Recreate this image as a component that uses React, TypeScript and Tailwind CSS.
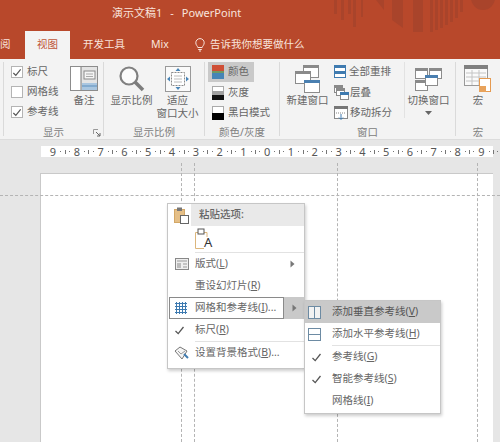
import React from "react";

const Check = ({ className = "" }: { className?: string }) => (
  <svg width="11" height="11" viewBox="0 0 11 11" className={className}>
    <path d="M1.5 6 L4.2 8.6 L9.5 2" fill="none" stroke="#555" strokeWidth="1.3" />
  </svg>
);

const Arrow = () => (
  <svg width="5" height="8" viewBox="0 0 5 8">
    <path d="M0.5 0.5 L4.5 4 L0.5 7.5 Z" fill="#777" />
  </svg>
);

const CheckRow = ({ checked, label }: { checked?: boolean; label: string }) => (
  <div className="flex h-[20px] items-center gap-[4px]">
    <span className="flex h-[12px] w-[12px] items-center justify-center border border-[#b4b4b4] bg-white">
      {checked && <Check />}
    </span>
    <span>{label}</span>
  </div>
);

const Group = ({ w, label, children, launcher }: { w: string; label?: string; children?: React.ReactNode; launcher?: boolean }) => (
  <div className={`relative flex flex-col border-r border-[#dadada] ${w}`}>
    <div className="flex flex-1">{children}</div>
    {label && <div className="mb-[-3px] text-center leading-[14px] text-[#808080]">{label}</div>}
    {launcher && (
      <svg width="8" height="8" viewBox="0 0 8 8" className="absolute bottom-[-1px] right-[2px]">
        <path d="M0.5 0.5 H5 M0.5 0.5 V5" stroke="#999" fill="none" />
        <path d="M3 3 L7 7 M7 4 V7 H4" stroke="#666" fill="none" />
      </svg>
    )}
  </div>
);

const LargeBtn = ({ icon, lines, className = "" }: { icon: React.ReactNode; lines: React.ReactNode[]; className?: string }) => (
  <div className={`flex flex-col items-center pt-[3px] ${className}`}>
    <div className="flex h-[27px] items-center justify-center">{icon}</div>
    <div className="mt-[2px] text-center leading-[13px]">
      {lines.map((l, i) => (
        <div key={i} className="whitespace-nowrap">{l}</div>
      ))}
    </div>
  </div>
);

const NotesIcon = () => (
  <svg width="28" height="25" viewBox="0 0 28 25">
    <rect x="0.5" y="0.5" width="27" height="24" fill="#e4e4e4" stroke="#8c8c8c" />
    <rect x="1" y="1" width="10" height="23" fill="#fff" />
    <path d="M11 1 V24" stroke="#777" />
    <rect x="14" y="5" width="11" height="8" fill="#f4f4f4" stroke="#8a8a8a" />
    <path d="M16 8 H23 M16 10.500 H23" stroke="#aaa" />
    <rect x="12" y="17" width="15" height="7" fill="#a9c6e0" />
    <path d="M12 20 H27" stroke="#5c8fbd" />
  </svg>
);

const ZoomIcon = () => (
  <svg width="26" height="26" viewBox="0 0 26 26">
    <circle cx="10" cy="10" r="8.500" fill="#fbfbfb" stroke="#808080" strokeWidth="2.200" />
    <path d="M16 16 L24 24" stroke="#7c7c7c" strokeWidth="3.500" />
  </svg>
);

const FitIcon = () => (
  <svg width="26" height="26" viewBox="0 0 26 26">
    <rect x="0.5" y="0.5" width="25" height="25" fill="#fafafa" stroke="#999" />
    <rect x="6.500" y="6.500" width="13" height="13" fill="#fff" stroke="#8a8a8a" strokeDasharray="2 1" />
    <path d="M9 10 H17 M9 13 H17 M9 16 H17" stroke="#bbb" />
    <path d="M13 2 L15.500 5 H10.500 Z M13 24 L15.500 21 H10.500 Z M2 13 L5 10.500 V15.500 Z M24 13 L21 10.500 V15.500 Z" fill="#4a86b8" />
  </svg>
);

const Swatch = ({ kind }: { kind: "color" | "gray" | "bw" }) => (
  <svg width="12" height="14" viewBox="0 0 12 14" className="shrink-0">
    {kind === "color" && (
      <>
        <rect width="12" height="6" fill="#cf4f36" />
        <rect y="6" width="12" height="2" fill="#6f9a63" />
        <rect y="8" width="12" height="6" fill="#4685b6" />
      </>
    )}
    {kind === "gray" && (
      <>
        <rect x="0.5" y="0.5" width="11" height="13" fill="#fff" stroke="#aaa" />
        <rect y="5" width="12" height="4" fill="#a0a0a0" />
        <rect y="9" width="12" height="5" fill="#111" />
      </>
    )}
    {kind === "bw" && (
      <>
        <rect x="0.5" y="0.5" width="11" height="13" fill="#fff" stroke="#aaa" />
        <rect y="7" width="12" height="7" fill="#000" />
      </>
    )}
  </svg>
);

const MiniWin = ({ x, y, w, h, bar = "#8a8a8a" }: { x: number; y: number; w: number; h: number; bar?: string }) => (
  <>
    <rect x={x + 0.5} y={y + 0.5} width={w} height={h} fill="#fff" stroke="#8c8c8c" />
    <rect x={x} y={y} width={w + 1} height={3} fill={bar} />
  </>
);

const NewWindowIcon = () => (
  <svg width="25" height="28" viewBox="0 0 25 28">
    <MiniWin x={8} y={0} w={15} h={12} />
    <MiniWin x={0} y={6} w={15} h={12} />
    <MiniWin x={9} y={15} w={15} h={12} bar="#4a7fb0" />
  </svg>
);

const SwitchIcon = () => (
  <svg width="27" height="24" viewBox="0 0 27 24">
    <MiniWin x={0} y={1} w={12} h={10} />
    <MiniWin x={14} y={1} w={12} h={10} />
    <MiniWin x={0} y={13} w={12} h={10} />
    <MiniWin x={10} y={8} w={12} h={10} bar="#4a7fb0" />
  </svg>
);

const MacroIcon = () => (
  <svg width="28" height="27" viewBox="0 0 28 27">
    <rect x="0.5" y="0.5" width="23" height="20" fill="#fafafa" stroke="#999" />
    <rect width="24" height="4" fill="#808080" />
    <path d="M2 8 H22 M2 12 H22 M2 16 H22 M8 5 V20 M15 5 V20" stroke="#c4c4c4" />
    <rect x="15.500" y="13.500" width="11" height="13" fill="#fff" stroke="#e59a50" />
    <rect x="15" y="21" width="7" height="6" fill="#e8a35c" />
  </svg>
);

const ArrangeIcon = () => (
  <svg width="13" height="14" viewBox="0 0 13 14" className="shrink-0">
    <rect x="0.5" y="0.5" width="11" height="12" fill="#fff" stroke="#3f7bb0" />
    <rect width="12" height="3" fill="#3f7bb0" />
    <rect y="6" width="12" height="3" fill="#3f7bb0" />
  </svg>
);

const CascadeIcon = () => (
  <svg width="15" height="15" viewBox="0 0 15 15" className="shrink-0">
    <MiniWin x={0} y={0} w={8} h={7} />
    <MiniWin x={2} y={3} w={8} h={7} />
    <MiniWin x={6} y={7} w={8} h={7} bar="#3f7bb0" />
  </svg>
);

const SplitIcon = () => (
  <svg width="14" height="14" viewBox="0 0 14 14" className="shrink-0">
    <rect x="0.5" y="0.5" width="13" height="12" fill="#fff" stroke="#8a8a8a" />
    <rect width="14" height="3" fill="#777" />
    <path d="M2 7 H12" stroke="#888" strokeDasharray="1 1" />
    <path d="M7 8 V13 M5 11.500 L7 13.500 L9 11.500" stroke="#3f7bb0" fill="none" />
  </svg>
);

const PasteIcon = () => (
  <svg width="15" height="17" viewBox="0 0 15 17">
    <rect x="0.500" y="2.500" width="10" height="13" fill="#e5bf87" stroke="#d3a766" />
    <rect x="3" y="0.500" width="5" height="3.500" fill="#777" />
    <rect x="6.500" y="8.500" width="8" height="8" fill="#fff" stroke="#666" />
  </svg>
);

const PasteTextIcon = () => (
  <svg width="16" height="22" viewBox="0 0 16 22">
    <path d="M9 20.500 H0.500 V4.500 H12 V9" fill="none" stroke="#dcb67c" />
    <rect x="3" y="1" width="6" height="5" fill="#fff" stroke="#555" />
  </svg>
);

const LayoutIcon = () => (
  <svg width="14" height="12" viewBox="0 0 14 12">
    <rect x="0.500" y="0.500" width="13" height="11" fill="#eee" stroke="#888" />
    <path d="M2 3 H12" stroke="#999" />
    <rect x="2" y="5" width="4" height="5" fill="#bbb" />
    <path d="M8 6 H12 M8 9 H12" stroke="#999" />
  </svg>
);

const GridIcon = () => (
  <svg width="12" height="12" viewBox="0 0 12 12">
    <path d="M0 1.500 H12 M0 4.500 H12 M0 7.500 H12 M0 10.500 H12 M1.500 0 V12 M4.500 0 V12 M7.500 0 V12 M10.500 0 V12" stroke="#3d7ab0" />
  </svg>
);

const BackgroundIcon = () => (
  <svg width="16" height="15" viewBox="0 0 16 15">
    <path d="M1 5 L6 1 L13 5 L8 13 Z" fill="#f5f5f5" stroke="#777" />
    <path d="M4 5 L7 8 L11 5" fill="none" stroke="#999" />
    <path d="M10 8 L14 12" stroke="#3f7bb0" strokeWidth="2" />
  </svg>
);

const SplitBox = ({ vertical }: { vertical?: boolean }) => (
  <svg width="13" height="13" viewBox="0 0 13 13" className="mr-[8px]">
    <rect x="0.500" y="0.500" width="12" height="12" fill={vertical ? "#f2f2f2" : "#fff"} stroke="#6d8ba3" />
    {vertical ? <path d="M6.500 1 V12" stroke="#6d8ba3" /> : <path d="M1 6.500 H12" stroke="#6d8ba3" />}
  </svg>
);

const MenuRow = ({ icon, children, arrow, className = "" }: { icon?: React.ReactNode; children: React.ReactNode; arrow?: boolean; className?: string }) => (
  <div className={`flex h-[22px] items-center ${className}`}>
    <span className="flex w-[27px] shrink-0 justify-center">{icon}</span>
    <span className="flex-1 whitespace-nowrap">{children}</span>
    {arrow && <span className="mr-[9px]"><Arrow /></span>}
  </div>
);

const rulerNums = [9, 8, 7, 6, 5, 4, 3, 2, 1, 0, 1, 2, 3, 4, 5, 6, 7, 8, 9];

const RulerMarks = () => (
  <div className="flex h-[11px] w-[452px] items-center bg-white pl-[1px] text-[#555]">
    <span className="h-[4px] w-px bg-[#777]" />
    <span className="mx-[3.5px] h-px w-px bg-[#777]" />
    {rulerNums.map((n, i) => (
      <div key={i} className="flex w-[23.8px] shrink-0 items-center justify-between">
        <span className="w-[8px] text-center text-[11px] leading-[11px]">{n}</span>
        <span className="h-px w-px bg-[#777]" />
        <span className="h-[4px] w-px bg-[#777]" />
        <span className="mr-[3px] h-px w-px bg-[#777]" />
      </div>
    ))}
  </div>
);

export default function App() {
  return (
    <div className="h-[442px] w-[500px] overflow-hidden bg-[#e6e6e6] font-['Noto_Sans','Noto_Sans_CJK_SC',sans-serif] text-[10.500px] text-[#666]">
      {/* title bar + tabs */}
      <div className="relative h-[59px] bg-[#b8482b] text-[#f8e4dd]">
        <svg width="170" height="34" viewBox="0 0 170 34" className="absolute right-0 top-0">
          <g fill="#a9442b">
            <rect x="4" width="3" height="14" />
            <rect x="11" width="3" height="20" />
            <rect x="18" width="3" height="14" />
            <rect x="23" width="3" height="27" />
            <rect x="31" width="2" height="17" />
            <path d="M46 0 H54 V10 Z" />
            <path d="M62 0 H73 V28 L62 20 Z" />
            <rect x="83" width="10" height="32" />
            <rect x="100" width="3" height="32" />
            <rect x="105" width="3" height="30" />
            <rect x="110" width="3" height="28" />
            <rect x="115" width="3" height="25" />
            <rect x="120" width="3" height="22" />
            <rect x="125" width="3" height="18" />
            <rect x="130" width="3" height="12" />
            <circle cx="153" cy="-2" r="12" />
          </g>
        </svg>
        <div className="flex h-[31px] items-center pb-[4px] pl-[112px] text-[11px]">
          <span>演示文稿1</span>
          <span className="mx-[8px]">-</span>
          <span>PowerPoint</span>
        </div>
        <div className="flex h-[28px] items-center text-[10.500px]">
          <span className="w-[25px]">阅</span>
          <span className="flex h-full w-[45px] items-center justify-center bg-[#f3f3f3] text-[#c0563a]">视图</span>
          <span className="ml-[13px] w-[68px]">开发工具</span>
          <span className="w-[44px]">Mix</span>
          <svg width="10" height="14" viewBox="0 0 10 14" className="mr-[5px]">
            <path d="M2.800 9.500 C2.500 8 0.800 7 0.800 4.800 A4.200 4.200 0 0 1 9.200 4.800 C9.200 7 7.500 8 7.200 9.500 Z M3.200 11.500 H6.800 M4 13 H6" fill="none" stroke="#f8e4dd" />
          </svg>
          <span>告诉我你想要做什么</span>
        </div>
      </div>

      {/* ribbon */}
      <div className="flex h-[81px] border-b border-[#dcdcdc] bg-[#f3f3f3] py-[3px]">
        <Group w="w-[4px]" />
        <Group w="w-[100px]" label="显示" launcher>
          <div className="ml-[7px] flex w-[54px] flex-col">
            <CheckRow checked label="标尺" />
            <CheckRow label="网格线" />
            <CheckRow checked label="参考线" />
          </div>
          <LargeBtn icon={<NotesIcon />} lines={["备注"]} className="ml-[4px] w-[30px]" />
        </Group>
        <Group w="w-[101px]" label="显示比例">
          <LargeBtn icon={<ZoomIcon />} lines={["显示比例"]} className="ml-[6px] w-[43px]" />
          <LargeBtn icon={<FitIcon />} lines={["适应", "窗口大小"]} className="ml-[3px] w-[43px]" />
        </Group>
        <Group w="w-[75px]" label="颜色/灰度">
          <div className="ml-[3px] flex w-[66px] flex-col">
            <div className="flex h-[20px] w-[46px] items-center gap-[4px] bg-[#c9c9c9] pl-[4px]"><Swatch kind="color" />颜色</div>
            <div className="flex h-[21px] items-center gap-[4px] pl-[4px]"><Swatch kind="gray" />灰度</div>
            <div className="flex h-[20px] items-center gap-[4px] whitespace-nowrap pl-[4px]"><Swatch kind="bw" />黑白模式</div>
          </div>
        </Group>
        <Group w="w-[176px]" label="窗口">
          <LargeBtn icon={<NewWindowIcon />} lines={["新建窗口"]} className="ml-[6px] w-[43px]" />
          <div className="ml-[5px] flex w-[68px] flex-col">
            <div className="flex h-[20px] items-center gap-[2px]"><ArrangeIcon />全部重排</div>
            <div className="flex h-[21px] items-center gap-[1px]"><CascadeIcon />层叠</div>
            <div className="flex h-[20px] items-center gap-[2px]"><SplitIcon />移动拆分</div>
          </div>
          <div className="ml-[2px] h-[56px] w-px bg-[#e2e2e2]" />
          <LargeBtn
            icon={<SwitchIcon />}
            lines={[
              "切换窗口",
              <svg key="a" width="7" height="4" viewBox="0 0 7 4" className="mx-auto mt-[4px]"><path d="M0 0 H7 L3.500 4 Z" fill="#666" /></svg>,
            ]}
            className="ml-[2px] w-[43px]"
          />
        </Group>
        <div className="relative flex flex-1 flex-col">
          <div className="flex flex-1 justify-center">
            <LargeBtn icon={<MacroIcon />} lines={["宏"]} />
          </div>
          <div className="mb-[-3px] text-center leading-[14px] text-[#808080]">宏</div>
        </div>
      </div>

      {/* ruler */}
      <div className="flex h-[20px] items-start bg-[#e6e6e6] pl-[41px] pt-[6px]">
        <RulerMarks />
      </div>

      {/* slide area */}
      <div className="relative h-[282px] pl-[40px] pt-[13px]">
        <div className="h-full w-[453px] border-l border-t border-[#c9c9c9] bg-white" />
        <div className="absolute left-0 top-[35px] w-[500px] border-t border-dashed border-[#b4b4b4]" />
        <div className="absolute bottom-0 left-[181px] top-[3px] border-l border-dashed border-[#b4b4b4]" />
        <div className="absolute bottom-0 left-[194px] top-[3px] border-l border-dashed border-[#b4b4b4]" />
        <div className="absolute bottom-0 left-[337px] top-[3px] border-l border-dashed border-[#b4b4b4]" />
        <div className="absolute bottom-0 left-[477px] top-[3px] border-l border-dashed border-[#b4b4b4]" />

        {/* context menu */}
        <div className="absolute left-[167px] top-[43px] h-[166px] w-[138px] border border-[#c6c6c6] bg-white shadow-[1px_2px_3px_rgba(0,0,0,0.2)]">
          <div className="flex h-[22px] items-center">
            <span className="flex w-[23px] justify-center pl-[3px]"><PasteIcon /></span>
            <span className="flex h-full flex-1 items-center bg-[#e9e9e9] pl-[8px] font-medium">粘贴选项:</span>
          </div>
          <div className="relative flex h-[26px] items-center pl-[27px]">
            <PasteTextIcon />
            <span className="absolute left-[36px] top-[9px] text-[13px] leading-[14px] text-[#333]">A</span>
          </div>
          <div className="ml-[27px] border-t border-[#e2e2e2]" />
          <MenuRow icon={<LayoutIcon />} arrow>版式(<u>L</u>)</MenuRow>
          <MenuRow>重设幻灯片(<u>R</u>)</MenuRow>
          <div className="ml-[1px] flex h-[22px]">
            <div className="flex w-[115px] items-center border border-[#8a8a8a]">
              <span className="flex w-[25px] justify-center pr-[3px]"><GridIcon /></span>
              <span className="whitespace-nowrap">网格和参考线(<u>I</u>)...</span>
            </div>
            <div className="flex flex-1 items-center justify-center bg-[#c9c9c9]"><Arrow /></div>
          </div>
          <MenuRow icon={<Check className="mr-[4px]" />}>标尺(<u>R</u>)</MenuRow>
          <div className="ml-[27px] border-t border-[#e2e2e2]" />
          <MenuRow icon={<BackgroundIcon />}>设置背景格式(<u>B</u>)...</MenuRow>
        </div>

        {/* guides submenu */}
        <div className="absolute left-[304px] top-[140px] h-[114px] w-[137px] border border-[#c6c6c6] bg-white shadow-[1px_2px_3px_rgba(0,0,0,0.2)]">
          <MenuRow icon={<SplitBox vertical />} className="bg-[#c9c9c9] text-[#555]">添加垂直参考线(<u>V</u>)</MenuRow>
          <MenuRow icon={<SplitBox />}>添加水平参考线(<u>H</u>)</MenuRow>
          <div className="ml-[27px] border-t border-[#e2e2e2]" />
          <MenuRow icon={<Check className="mr-[4px]" />}>参考线(<u>G</u>)</MenuRow>
          <MenuRow icon={<Check className="mr-[4px]" />}>智能参考线(<u>S</u>)</MenuRow>
          <MenuRow>网格线(<u>I</u>)</MenuRow>
        </div>
      </div>
    </div>
  );
}
